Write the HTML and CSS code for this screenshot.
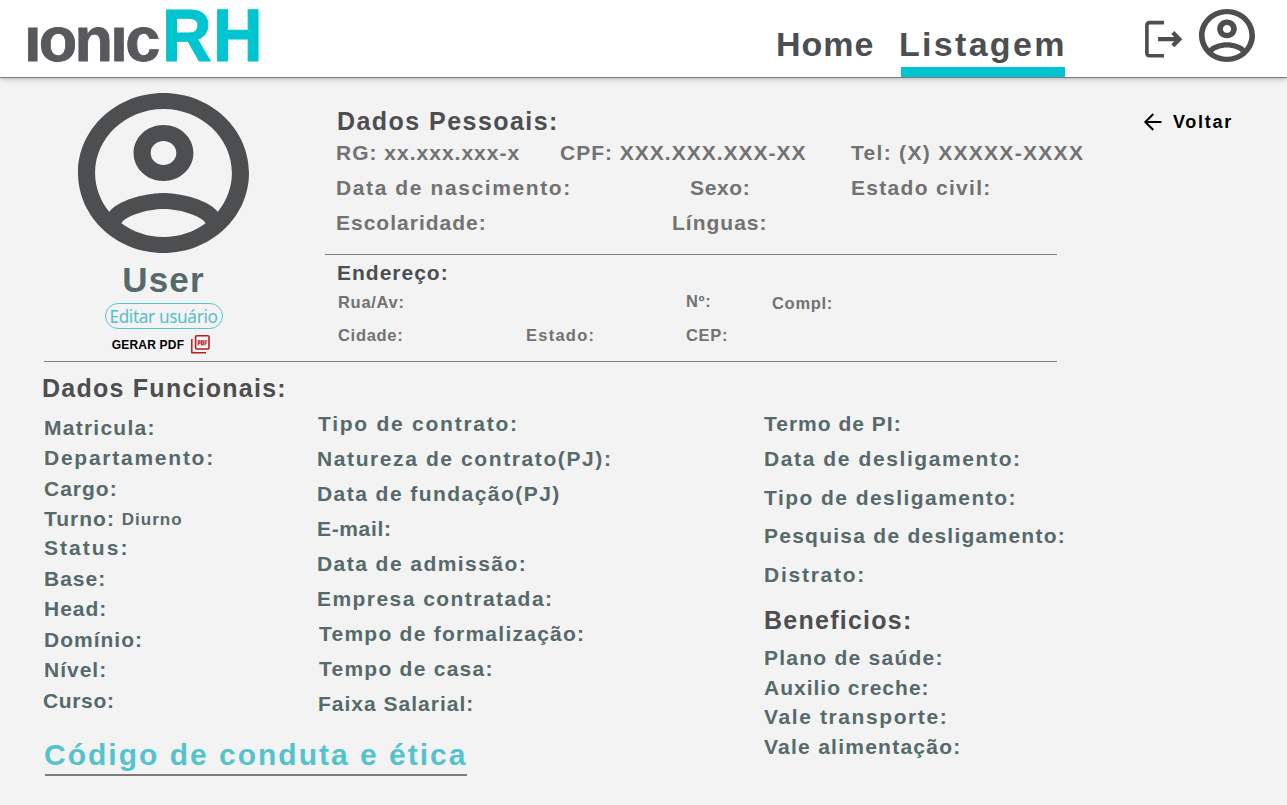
FILE: index.html
```html
<!DOCTYPE html>
<html lang="pt-BR">
<head>
<meta charset="utf-8">
<title>ionicRH</title>
<link rel="stylesheet" href="styles.css">
</head>
<body>
<header class="topbar">
  <div class="logo"><span class="logo-ionic">ıonıc</span><span class="logo-rh">RH</span></div>
  <nav class="nav">
    <a class="nav-link nav-home">Home</a>
    <a class="nav-link nav-active">Listagem</a>
  </nav>
  <svg class="icon-exit" viewBox="0 0 38 38" fill="none" stroke="#4d4e50" stroke-width="3.600"><path d="M19 2.600H4.600Q1.900 2.600 1.900 5.300V33Q1.900 35.700 4.600 35.700H19"/><path stroke-width="4.300" d="M13 19.200H34M27.800 12.600L34.300 19.200L27.800 25.800"/></svg>
  <svg class="icon-account" viewBox="2 2 20 20" preserveAspectRatio="none" fill="#4d4e50"><path d="M12 2C6.480 2 2 6.480 2 12s4.480 10 10 10 10-4.480 10-10S17.520 2 12 2zM7.070 18.280c.43-.9 3.050-1.780 4.930-1.780s4.510.88 4.930 1.780C15.570 19.360 13.860 20 12 20s-3.570-.64-4.930-1.720zM18.360 16.830C16.930 15.090 13.460 14.500 12 14.500s-4.930.59-6.360 2.330C4.620 15.490 4 13.820 4 12c0-4.410 3.590-8 8-8s8 3.590 8 8c0 1.820-.62 3.490-1.640 4.830zM12 6c-1.940 0-3.500 1.560-3.500 3.500S10.060 13 12 13s3.500-1.560 3.500-3.500S13.940 6 12 6zm0 5c-.83 0-1.500-.67-1.500-1.500S11.170 8 12 8s1.500.67 1.500 1.500S12.830 11 12 11z"/></svg>
</header>
<main class="page">
  <section class="profile">
    <aside class="card">
      <svg class="avatar" viewBox="2 2 20 20" preserveAspectRatio="none" fill="#4d4e50"><path d="M12 2C6.480 2 2 6.480 2 12s4.480 10 10 10 10-4.480 10-10S17.520 2 12 2zM7.070 18.280c.43-.9 3.050-1.780 4.930-1.780s4.510.88 4.930 1.780C15.570 19.360 13.860 20 12 20s-3.570-.64-4.930-1.720zM18.360 16.830C16.930 15.090 13.460 14.500 12 14.500s-4.930.59-6.360 2.330C4.620 15.490 4 13.820 4 12c0-4.410 3.590-8 8-8s8 3.590 8 8c0 1.820-.62 3.490-1.640 4.830zM12 6c-1.940 0-3.500 1.560-3.500 3.500S10.060 13 12 13s3.500-1.560 3.500-3.500S13.940 6 12 6zm0 5c-.83 0-1.500-.67-1.500-1.500S11.170 8 12 8s1.500.67 1.500 1.500S12.830 11 12 11z"/></svg>
      <h1 class="user">User</h1>
      <button class="edit">Editar usuário</button>
      <a class="pdf"><span>GERAR PDF</span>
        <svg class="icon-pdf" viewBox="0 0 19 19" fill="none" stroke="#b71f25"><path stroke-width="1.500" d="M.8 4V17.800H15"/><rect x="4.600" y=".8" width="13.400" height="13.200" rx="1" stroke-width="1.600"/><path stroke-width="1.100" d="M7.300 10.300V5.800H9V8.200H7.300M10.600 5.800V9.700H12.200V5.800ZM14 10.300V5.800H16.200M14 8H15.800"/></svg>
      </a>
    </aside>
    <div class="details">
      <h2 class="title t-pessoais">Dados Pessoais:</h2>
      <div class="row row-1"><span class="ls-s">RG: xx.xxx.xxx-x</span><span class="ls-s">CPF: XXX.XXX.XXX-XX</span><span>Tel: (X) XXXXX-XXXX</span></div>
      <div class="row row-2"><span class="ls-w">Data de nascimento:</span><span class="ls-xs">Sexo:</span><span>Estado civil:</span></div>
      <div class="row row-3"><span class="ls-s">Escolaridade:</span><span class="ls-s">Línguas:</span></div>
      <div class="address">
        <h3 class="subtitle">Endereço:</h3>
        <div class="small small-1"><span>Rua/Av:</span><span class="num">Nº:</span><span class="compl">Compl:</span></div>
        <div class="small small-2"><span>Cidade:</span><span class="ls-m">Estado:</span><span>CEP:</span></div>
      </div>
    </div>
    <a class="back"><svg class="icon-back" viewBox="0 0 19 18" fill="none" stroke="#000" stroke-width="2"><path d="M18.500 9H2.500M10.300 1L2.300 9L10.300 17"/></svg><span>Voltar</span></a>
  </section>
  <section class="work">
    <div class="col-a">
      <h2 class="title t-func">Dados Funcionais:</h2>
      <ul class="list list-a">
        <li class="ls-m">Matricula:</li><li class="ls-l">Departamento:</li><li class="ls-s">Cargo:</li><li class="turno ls-s">Turno: <small class="value">Diurno</small></li><li class="ls-xl">Status:</li><li class="ls-s">Base:</li><li class="ls-s">Head:</li><li class="ls-s">Domínio:</li><li class="ls-s">Nível:</li><li class="ls-xs curso">Curso:</li>
      </ul>
    </div>
    <ul class="list list-b">
      <li class="in-1 ls-l">Tipo de contrato:</li><li class="ls-w">Natureza de contrato(PJ):</li><li>Data de fundação(PJ)</li><li class="ls-xs">E-mail:</li><li>Data de admissão:</li><li>Empresa contratada:</li><li class="in-2 ls-m">Tempo de formalização:</li><li class="in-2 ls-m">Tempo de casa:</li><li class="in-1 ls-s">Faixa Salarial:</li>
    </ul>
    <div class="col-c">
      <ul class="list list-c">
        <li class="first ls-s">Termo de PI:</li><li class="ls-w">Data de desligamento:</li><li>Tipo de desligamento:</li><li class="ls-m">Pesquisa de desligamento:</li><li class="ls-l">Distrato:</li>
      </ul>
      <h2 class="title t-ben">Beneficios:</h2>
      <ul class="list list-d">
        <li class="ls-m">Plano de saúde:</li><li class="ls-s">Auxilio creche:</li><li class="ls-w">Vale transporte:</li><li class="ls-m">Vale alimentação:</li>
      </ul>
    </div>
  </section>
  <a class="ethics">Código de conduta e ética</a>
</main>
</body>
</html>
```
FILE: styles.css
```css
* { box-sizing: border-box; }
body {
  margin: 0;
  height: 805px;
  background: #f3f3f3;
  color: #4d4e50;
  font-family: "Liberation Sans", Arial, sans-serif;
  font-weight: 700;
  white-space: nowrap;
}
h1, h2, h3, ul { margin: 0; padding: 0; font-weight: 700; list-style: none; }

.topbar {
  display: flex;
  align-items: flex-start;
  height: 78px;
  padding-left: 24px;
  background: #fff;
  border-bottom: 1px solid #7c7c7c;
  box-shadow: 0 1px 5px rgba(0, 0, 0, .28);
}
.logo { display: flex; align-items: baseline; width: 752px; height: 77px; line-height: 71px; }
.logo-ionic { width: 138px; font-size: 63px; letter-spacing: -2.700px; color: #57595c; -webkit-text-stroke: .8px #57595c; }
.logo-rh { font-size: 74px; letter-spacing: 1.500px; color: #00c5d1; -webkit-text-stroke: 1px #00c5d1; transform: scaleX(.93); transform-origin: left; }
.nav { display: flex; gap: 22px; }
.nav-link { height: 77px; font-size: 34px; line-height: 88px; letter-spacing: 1px; }
.nav-home { width: 103px; }
.nav-active { width: 164px; border-bottom: 10px solid #00c5d1; letter-spacing: 2.300px; text-indent: -2px; }
.icon-exit { width: 38px; height: 38px; margin: 20px 0 0 80px; }
.icon-account { width: 56px; height: 53px; margin: 9px 0 0 16px; }

.profile { display: flex; height: 283px; padding-left: 44px; }
.card { display: flex; flex-direction: column; align-items: center; width: 281px; height: 284px; padding: 15px 43px 0 0; border-bottom: 1px solid #808080; }
.avatar { width: 171px; height: 160px; }
.user { height: 50px; padding-left: 1px; font-size: 35px; line-height: 54px; letter-spacing: 1.200px; color: #56696b; }
.edit {
  width: 118px; height: 26px; margin: 0 0 0 1px; padding: 0;
  border: 1px solid #55c7d1; border-radius: 13px;
  background: none; color: #55c0cb;
  font: 400 17.200px/25px "Noto Sans", "Open Sans", sans-serif;
  letter-spacing: -.350px;
}
.pdf { display: flex; align-items: center; gap: 7px; height: 30px; padding-right: 4px; font-size: 12px; letter-spacing: .200px; color: #000; }
.pdf span { padding-top: 2px; }
.icon-pdf { width: 19px; height: 19px; }
.details { width: 732px; height: 284px; padding-top: 26px; border-bottom: 1px solid #808080; }
.title { font-size: 25px; letter-spacing: 1.250px; }
.t-pessoais { padding-left: 12px; height: 31px; line-height: 35px; letter-spacing: 1.450px; }
.row { display: grid; height: 35px; padding-left: 11px; font-size: 21px; line-height: 35px; letter-spacing: 1.300px; color: #727272; }
.row-1 { grid-template-columns: 224px 291px auto; }
.row-2 { grid-template-columns: 354px 161px auto; }
.row-3 { grid-template-columns: 336px auto; }
.address { margin-top: 14px; padding-left: 12px; border-top: 1px solid #808080; }
.subtitle { height: 35px; font-size: 21px; line-height: 35px; letter-spacing: 1px; }
.small { display: grid; height: 33px; padding-left: 1px; font-size: 16.500px; line-height: 25px; letter-spacing: .700px; color: #727272; }
.small-1 { grid-template-columns: 348px 86px auto; }
.small-2 { grid-template-columns: 188px 160px auto; }
.num { line-height: 23px; }
.compl { line-height: 27px; }
.back { display: flex; align-items: center; gap: 11px; height: 36px; margin: 26px 0 0 86px; font-size: 18px; letter-spacing: 1.700px; color: #000; }
.icon-back { width: 19px; height: 18px; }

/* Tracking steps */
.list { letter-spacing: 1.450px; }
.ls-xs { letter-spacing: .650px; }
.ls-s { letter-spacing: 1px; }
.ls-m { letter-spacing: 1.250px; }
.ls-w { letter-spacing: 1.600px; }
.ls-l { letter-spacing: 1.750px; }
.ls-xl { letter-spacing: 2.050px; }

.work { display: flex; height: 372px; padding-left: 42px; }
.col-a { width: 275px; padding-top: 9px; }
.t-func { height: 40.500px; line-height: 36px; }
.list { color: #56696b; font-size: 21px; }
.list li { height: 35px; line-height: 35px; }
.list-a li { height: 30.500px; line-height: 33px; padding-left: 2px; }
.list-a .turno { height: 29px; }
.list-a .curso { padding-left: 1px; }
.list-a .value { font-size: 17px; letter-spacing: 1px; vertical-align: 1px; line-height: 1; }
.list-b { width: 447px; padding-top: 45px; }
.list-b .in-1 { padding-left: 1px; }
.list-b .in-2 { padding-left: 2px; }
.col-c { padding-top: 45px; }
.list-c li { height: 38.500px; }
.list-c .first { height: 35px; }
.t-ben { height: 37px; line-height: 50px; }
.list-d { padding-top: 8px; }
.list-d li { height: 29.600px; line-height: 35px; }

.ethics { display: block; width: 422px; height: 43px; margin: 0 0 0 45px; padding-top: 1px; border-bottom: 2px solid #7b7b7b; font-size: 30px; line-height: 42px; letter-spacing: 2px; text-indent: -1px; color: #55c3ce; }
```
